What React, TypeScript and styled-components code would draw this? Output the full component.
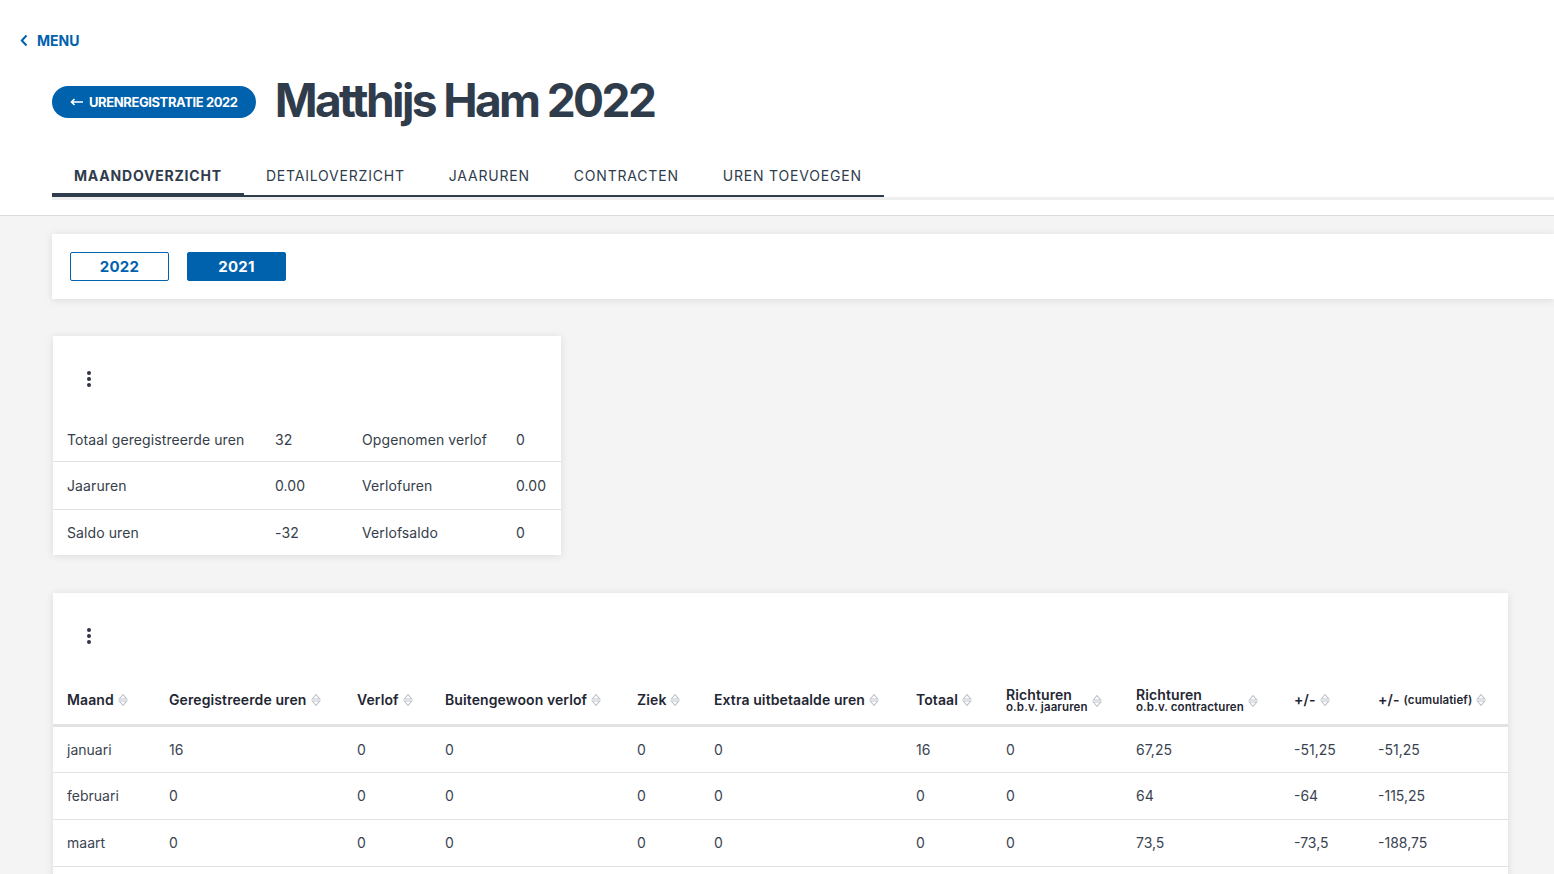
import { FC } from 'react';
import styled, { createGlobalStyle } from 'styled-components';

const GlobalStyle = createGlobalStyle`
  html, body {
    margin: 0;
    padding: 0;
    background: #f4f4f4;
    font-family: Inter, 'Noto Sans', sans-serif;
    color: #333c48;
  }
  * { box-sizing: border-box; }
`;

const blue = '#0061ad';
const ink = '#2f3c4c';

const Header = styled.header`
  background: #fff;
  border-bottom: 1px solid #dcdcdc;
  padding: 30px 0 15px;
`;

const MenuLink = styled.a`
  display: inline-flex;
  align-items: center;
  gap: 9px;
  margin-left: 20px;
  color: ${blue};
  font-weight: 700;
  font-size: 14px;
  letter-spacing: 0;
  text-decoration: none;
  height: 20px;
`;

const TitleRow = styled.div`
  display: flex;
  align-items: center;
  gap: 19px;
  padding-left: 52px;
  margin-top: 21px;
`;

const BackPill = styled.a`
  display: inline-flex;
  align-items: center;
  gap: 5px;
  height: 32px;
  margin-top: 4px;
  padding: 0 18px;
  border-radius: 16px;
  background: ${blue};
  color: #fff;
  font-weight: 700;
  font-size: 13px;
  letter-spacing: -0.4px;
  text-decoration: none;
  white-space: nowrap;
`;

const Title = styled.h1`
  margin: 0;
  font-size: 46px;
  font-weight: 700;
  letter-spacing: -2.6px;
  color: ${ink};
  line-height: 56px;
`;

const TabStrip = styled.nav`
  display: flex;
  margin-top: 38px;
  margin-left: 52px;
  border-bottom: 3px solid #efefef;
`;

const TabList = styled.div`
  display: flex;
  border-bottom: 2px solid ${ink};
`;

const Tab = styled.div<{ $active?: boolean }>`
  padding: 0 22px 9px;
  font-size: 14px;
  letter-spacing: ${(p) => (p.$active ? '0.8px' : '0.8px')};
  font-weight: ${(p) => (p.$active ? 700 : 400)};
  color: ${ink};
  line-height: 20px;
  position: relative;
  &::after {
    content: '';
    display: ${(p) => (p.$active ? 'block' : 'none')};
    position: absolute;
    left: 0;
    right: 0;
    bottom: -2px;
    height: 4px;
    background: ${ink};
  }
`;

const Main = styled.main`
  padding: 18px 0 40px 52px;
  display: flex;
  flex-direction: column;
  align-items: flex-start;
`;

const Card = styled.section`
  background: #fff;
  box-shadow: 0 1px 8px rgba(0, 0, 0, 0.1);
`;

const YearCard = styled(Card)`
  align-self: stretch;
  display: flex;
  gap: 18px;
  padding: 18px;
`;

const YearButton = styled.button<{ $filled?: boolean }>`
  width: 99px;
  height: 29px;
  border: 1px solid ${blue};
  border-radius: 2px;
  background: ${(p) => (p.$filled ? blue : '#fff')};
  color: ${(p) => (p.$filled ? '#fff' : blue)};
  font-family: Inter, sans-serif;
  font-weight: 700;
  font-size: 15px;
  letter-spacing: 0.3px;
  padding: 0;
`;

const SummaryCard = styled(Card)`
  margin-top: 37px;
  margin-left: 1px;
  width: 508px;
`;

const TableCard = styled(Card)`
  margin-top: 38px;
  margin-left: 1px;
  width: 1455px;
`;

const DotsButton = styled.div<{ $h: number }>`
  height: ${(p) => p.$h}px;
  padding: 34px 0 0 33px;
  color: #2d3642;
`;

const SummaryTable = styled.table`
  width: 100%;
  border-collapse: collapse;
  table-layout: fixed;
  font-size: 14px;
  letter-spacing: 0.1px;
  td {
    padding: 0 0 0 14px;
    height: 47.5px;
    color: #353e4a;
    border-top: 1px solid #e2e2e2;
    white-space: nowrap;
  }
  tr:first-child td {
    border-top: none;
    height: 43px;
  }
  tr:last-child td {
    height: 46px;
  }
`;

const DataTable = styled.table`
  width: 100%;
  border-collapse: collapse;
  table-layout: fixed;
  font-size: 14px;
  th {
    text-align: left;
    font-weight: 600;
    color: #1f2733;
    padding: 0 0 0 14px;
    height: 49px;
    vertical-align: middle;
    border-bottom: 3px solid #e2e2e2;
    white-space: nowrap;
    letter-spacing: 0.1px;
  }
  td {
    padding: 0 0 0 14px;
    height: 47px;
    color: #3a4350;
    border-bottom: 1.5px solid #e2e2e2;
    white-space: nowrap;
  }
`;

const HeadInner = styled.span`
  display: inline-flex;
  align-items: center;
  gap: 4px;
`;

const Stack = styled.span`
  display: inline-flex;
  flex-direction: column;
  line-height: 13px;
  small {
    font-size: 11.5px;
    font-weight: 600;
  }
`;

const Small = styled.span`
  font-size: 11.5px;
  font-weight: 600;
`;

const SortIcon: FC = () => (
  <svg width="10" height="14" viewBox="0 0 10 14" fill="none" stroke="#bfc3ca" strokeWidth="1.1">
    <path d="M1.2 6 L5 1.6 L8.8 6 Z" />
    <path d="M1.2 8 L5 12.4 L8.8 8 Z" />
  </svg>
);

const Dots: FC = () => (
  <svg width="6" height="18" viewBox="0 0 6 18" fill="currentColor">
    <circle cx="3" cy="3" r="2" />
    <circle cx="3" cy="9" r="2" />
    <circle cx="3" cy="15" r="2" />
  </svg>
);

const columns = [102, 188, 88, 192, 77, 202, 90, 130, 158, 84, 144];

const rows: string[][] = [
  ['januari', '16', '0', '0', '0', '0', '16', '0', '67,25', '-51,25', '-51,25'],
  ['februari', '0', '0', '0', '0', '0', '0', '0', '64', '-64', '-115,25'],
  ['maart', '0', '0', '0', '0', '0', '0', '0', '73,5', '-73,5', '-188,75'],
  ['april', '0', '0', '0', '0', '0', '0', '0', '64', '-64', '-252,75'],
  ['mei', '0', '0', '0', '0', '0', '0', '0', '64', '-64', '-316,75'],
  ['juni', '16', '0', '0', '0', '0', '16', '0', '70,5', '-54,5', '-371,25'],
];

const tabs = ['MAANDOVERZICHT', 'DETAILOVERZICHT', 'JAARUREN', 'CONTRACTEN', 'UREN TOEVOEGEN'];

const App: FC = () => (
  <>
    <GlobalStyle />
    <Header>
      <MenuLink href="#">
        <svg width="8" height="13" viewBox="0 0 8 13" fill="none" stroke={blue} strokeWidth="2">
          <path d="M6.5 1.5 L1.8 6.5 L6.5 11.5" />
        </svg>
        MENU
      </MenuLink>
      <TitleRow>
        <BackPill href="#">
          <svg width="14" height="8" viewBox="0 0 14 8" fill="none" stroke="#fff" strokeWidth="1.6">
            <path d="M13 4 H2 M4.5 1 L1.5 4 L4.5 7" />
          </svg>
          URENREGISTRATIE 2022
        </BackPill>
        <Title>Matthijs Ham 2022</Title>
      </TitleRow>
      <TabStrip>
        <TabList>
          {tabs.map((t, i) => (
            <Tab key={t} $active={i === 0}>
              {t}
            </Tab>
          ))}
        </TabList>
      </TabStrip>
    </Header>
    <Main>
      <YearCard>
        <YearButton>2022</YearButton>
        <YearButton $filled>2021</YearButton>
      </YearCard>

      <SummaryCard>
        <DotsButton $h={83}>
          <Dots />
        </DotsButton>
        <SummaryTable>
          <colgroup>
            <col style={{ width: 208 }} />
            <col style={{ width: 87 }} />
            <col style={{ width: 154 }} />
            <col style={{ width: 59 }} />
          </colgroup>
          <tbody>
            <tr>
              <td>Totaal geregistreerde uren</td>
              <td>32</td>
              <td>Opgenomen verlof</td>
              <td>0</td>
            </tr>
            <tr>
              <td>Jaaruren</td>
              <td>0.00</td>
              <td>Verlofuren</td>
              <td>0.00</td>
            </tr>
            <tr>
              <td>Saldo uren</td>
              <td>-32</td>
              <td>Verlofsaldo</td>
              <td>0</td>
            </tr>
          </tbody>
        </SummaryTable>
      </SummaryCard>

      <TableCard>
        <DotsButton $h={83}>
          <Dots />
        </DotsButton>
        <DataTable>
          <colgroup>
            {columns.map((w, i) => (
              <col key={i} style={{ width: w }} />
            ))}
          </colgroup>
          <thead>
            <tr>
              {['Maand', 'Geregistreerde uren', 'Verlof', 'Buitengewoon verlof', 'Ziek', 'Extra uitbetaalde uren', 'Totaal'].map(
                (h) => (
                  <th key={h}>
                    <HeadInner>
                      {h}
                      <SortIcon />
                    </HeadInner>
                  </th>
                )
              )}
              <th>
                <HeadInner>
                  <Stack>
                    Richturen
                    <small>o.b.v. jaaruren</small>
                  </Stack>
                  <SortIcon />
                </HeadInner>
              </th>
              <th>
                <HeadInner>
                  <Stack>
                    Richturen
                    <small>o.b.v. contracturen</small>
                  </Stack>
                  <SortIcon />
                </HeadInner>
              </th>
              <th>
                <HeadInner>
                  +/-
                  <SortIcon />
                </HeadInner>
              </th>
              <th>
                <HeadInner>
                  +/- <Small>(cumulatief)</Small>
                  <SortIcon />
                </HeadInner>
              </th>
            </tr>
          </thead>
          <tbody>
            {rows.map((r) => (
              <tr key={r[0]}>
                {r.map((c, i) => (
                  <td key={i}>{c}</td>
                ))}
              </tr>
            ))}
          </tbody>
        </DataTable>
      </TableCard>
    </Main>
  </>
);

export default App;
